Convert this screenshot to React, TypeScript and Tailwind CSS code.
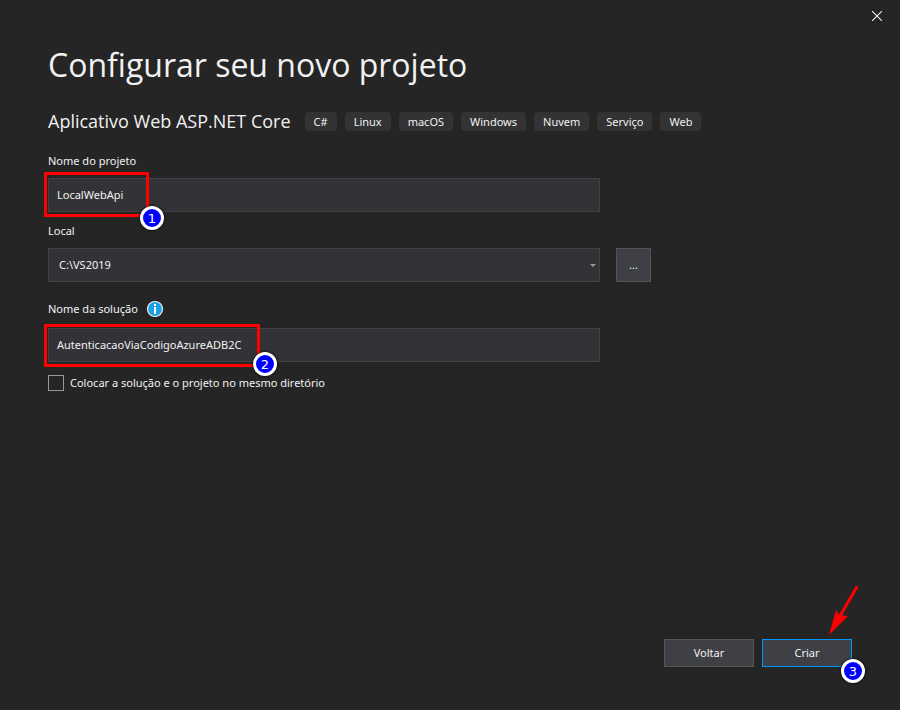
import { useState } from 'react';
import { clsx } from 'clsx';

const tags = ['C#', 'Linux', 'macOS', 'Windows', 'Nuvem', 'Serviço', 'Web'];

const fieldClass = 'block h-[34px] w-full border border-[#434346] bg-[#333337] text-[#f1f1f1] outline-none';

function StepBadge({ step, className }: { step: number; className: string }) {
    return (
        <span
            className={clsx(
                "absolute flex size-6 items-center justify-center rounded-full border-[3px] border-white bg-[#0000ff] font-['DejaVu_Sans'] text-[13px] leading-none text-white shadow-[0_0_3px_#000000]",
                className
            )}
        >
            {step}
        </span>
    );
}

function InfoIcon() {
    return (
        <svg width="18" height="18" viewBox="0 0 18 18" aria-hidden="true">
            <circle cx="9" cy="9" r="7.5" fill="#1ba1e2" stroke="#f1f1f1" strokeWidth="1.2" />
            <path d="M8 4h2v2H8zM8 7h2v7H8z" fill="#ffffff" />
        </svg>
    );
}

export default function App() {
    const [projectName, setProjectName] = useState('LocalWebApi');
    const [solutionName, setSolutionName] = useState('AutenticacaoViaCodigoAzureADB2C');
    const [sameFolder, setSameFolder] = useState(false);

    return (
        <div className="relative flex min-h-screen flex-col bg-[#252526] px-12 pt-10 pb-[43px] font-['Noto_Sans','Open_Sans',sans-serif] text-[11px] text-[#f1f1f1]">
            <button type="button" aria-label="Fechar" className="absolute top-2 right-[15px] flex size-4 items-center justify-center">
                <svg width="10" height="10" viewBox="0 0 10 10" stroke="#f1f1f1" strokeWidth="1.1">
                    <path d="M0 0l10 10M10 0L0 10" />
                </svg>
            </button>

            <main className="grow">
                <h1 className="font-['Open_Sans',sans-serif] text-[32px] leading-[50px]">Configurar seu novo projeto</h1>

                <div className="mt-[17px] flex items-center gap-[14px]">
                    <h2 className="font-['Open_Sans',sans-serif] text-lg leading-7">Aplicativo Web ASP.NET Core</h2>
                    <ul className="flex gap-2">
                        {tags.map((tag) => (
                            <li key={tag} className="rounded bg-[#333334] px-[9px] leading-[19px]">{tag}</li>
                        ))}
                    </ul>
                </div>

                <form className="mt-[17px] max-w-[552px]">
                    <label htmlFor="project" className="block leading-[18px]">Nome do projeto</label>
                    <div className="relative mt-2">
                        <input
                            id="project"
                            value={projectName}
                            onChange={(e) => setProjectName(e.target.value)}
                            className={clsx(fieldClass, 'px-2 pb-0.5')}
                        />
                        <div className="pointer-events-none absolute -top-1.5 -left-1 h-[45px] w-[105px] border-3 border-[#ff0000]">
                            <StepBadge step={1} className="-right-[18px] -bottom-4" />
                        </div>
                    </div>

                    <label htmlFor="location" className="mt-[10px] block leading-[18px]">Local</label>
                    <div className="relative mt-2">
                        <select id="location" className={clsx(fieldClass, 'appearance-none px-[10px]')}>
                            <option>C:\VS2019</option>
                        </select>
                        <svg className="pointer-events-none absolute top-4 right-1" width="6" height="4" viewBox="0 0 6 4" fill="#999999">
                            <path d="M0 0h6L3 3z" />
                        </svg>
                        <button
                            type="button"
                            aria-label="Procurar"
                            className="absolute top-0 left-full ml-4 h-[34px] w-[35px] border border-[#555555] bg-[#3f3f46]"
                        >
                            ...
                        </button>
                    </div>

                    <div className="mt-4 flex h-[22px] items-center gap-2">
                        <label htmlFor="solution">Nome da solução</label>
                        <InfoIcon />
                    </div>
                    <div className="relative mt-2">
                        <input
                            id="solution"
                            value={solutionName}
                            onChange={(e) => setSolutionName(e.target.value)}
                            className={clsx(fieldClass, 'px-2 pb-0.5')}
                        />
                        <div className="pointer-events-none absolute -top-1 -left-1 h-[43px] w-[216px] border-3 border-[#ff0000]">
                            <StepBadge step={2} className="-right-5 -bottom-3" />
                        </div>
                    </div>

                    <label className="mt-3 flex items-center gap-1.5 leading-[18px]">
                        <input
                            type="checkbox"
                            checked={sameFolder}
                            onChange={(e) => setSameFolder(e.target.checked)}
                            className="size-4 appearance-none border border-[#999999] bg-[#252526] checked:bg-[#0097fb]"
                        />
                        Colocar a solução e o projeto no mesmo diretório
                    </label>
                </form>
            </main>

            <footer className="flex justify-end gap-2">
                <button type="button" className="h-7 w-[90px] border border-[#555555] bg-[#3f3f46]">Voltar</button>
                <div className="relative">
                    <button type="button" className="block h-7 w-[90px] border border-[#0097fb] bg-[#3f3f46]">Criar</button>
                    <StepBadge step={3} className="-right-[13px] -bottom-4" />
                    <svg
                        className="pointer-events-none absolute right-[-7px] bottom-full mb-[3px]"
                        width="30"
                        height="50"
                        viewBox="0 0 30 50"
                        fill="#ff0000"
                    >
                        <path d="M27.5 1.5L11 30" stroke="#ff0000" strokeWidth="3" strokeLinecap="round" />
                        <path d="M0 49L7 24l3 5 9 1z" />
                    </svg>
                </div>
            </footer>
        </div>
    );
}
